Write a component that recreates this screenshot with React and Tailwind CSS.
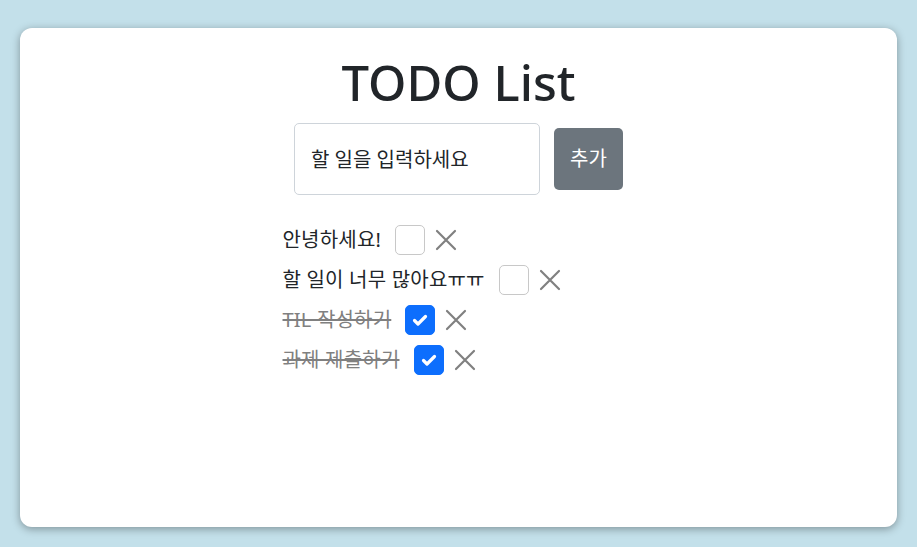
import { useState } from "react";

const initial = [
  { id: 1, text: "안녕하세요!", done: false },
  { id: 2, text: "할 일이 너무 많아요ㅠㅠ", done: false },
  { id: 3, text: "TIL 작성하기", done: true },
  { id: 4, text: "과제 제출하기", done: true },
];

function CheckBox({ checked, onChange }) {
  return (
    <button
      onClick={onChange}
      className={
        checked
          ? "flex h-[30px] w-[30px] items-center justify-center rounded-[5px] border border-[#0d6efd] bg-[#0d6efd]"
          : "flex h-[30px] w-[30px] items-center justify-center rounded-[5px] border border-[#c8c8c8] bg-white"
      }
    >
      {checked && (
        <svg width="20" height="20" viewBox="0 0 20 20" fill="none">
          <path d="M4.5 10.5l3.5 3.5L15.5 6.5" stroke="#fff" strokeWidth="3.2" strokeLinecap="round" strokeLinejoin="round" />
        </svg>
      )}
    </button>
  );
}

function DeleteIcon({ onClick }) {
  return (
    <button onClick={onClick} className="flex h-[30px] w-[24px] items-center justify-center">
      <svg width="22" height="22" viewBox="0 0 22 22">
        <path d="M2 2L20 20M20 2L2 20" stroke="#808080" strokeWidth="2.2" strokeLinecap="round" />
      </svg>
    </button>
  );
}

export default function App() {
  const [todos, setTodos] = useState(initial);

  const toggle = (id) =>
    setTodos((t) => t.map((x) => (x.id === id ? { ...x, done: !x.done } : x)));
  const remove = (id) => setTodos((t) => t.filter((x) => x.id !== id));

  return (
    <div
      className="min-h-[547px] bg-[#c3e0ea] px-[20px] pt-[28px] pb-[20px]"
      style={{ fontFamily: '"Noto Sans", "Noto Sans CJK KR", sans-serif' }}
    >
      <div className="h-[499px] rounded-[12px] bg-white shadow-[0_2px_8px_rgba(0,0,0,0.35)]">
        <h1 className="pt-[24px] text-center text-[49px] leading-[60px] font-medium text-[#212529]">
          TODO List
        </h1>
        <div className="mt-[11px] flex items-center justify-center gap-[14px]">
          <input
            placeholder="할 일을 입력하세요"
            className="h-[72px] w-[246px] rounded-[5px] border border-[#ced4da] px-[16px] text-[20px] text-[#212529] placeholder:text-[#212529] outline-none"
          />
          <button className="h-[62px] w-[69px] rounded-[5px] bg-[#6c757d] text-[20px] text-white">
            추가
          </button>
        </div>
        <div className="mt-[30px] flex justify-center">
          <ul className="flex w-[352px] flex-col gap-[10px]">
            {todos.map((t) => (
              <li key={t.id} className="flex h-[30px] items-center">
                <span
                  className={
                    t.done
                      ? "text-[20px] tracking-[0.2px] text-[#808080] line-through"
                      : "text-[20px] tracking-[0.2px] text-[#212529]"
                  }
                >
                  {t.text}
                </span>
                <span className="ml-[14px]">
                  <CheckBox checked={t.done} onChange={() => toggle(t.id)} />
                </span>
                <span className="ml-[9px]">
                  <DeleteIcon onClick={() => remove(t.id)} />
                </span>
              </li>
            ))}
          </ul>
        </div>
      </div>
    </div>
  );
}
